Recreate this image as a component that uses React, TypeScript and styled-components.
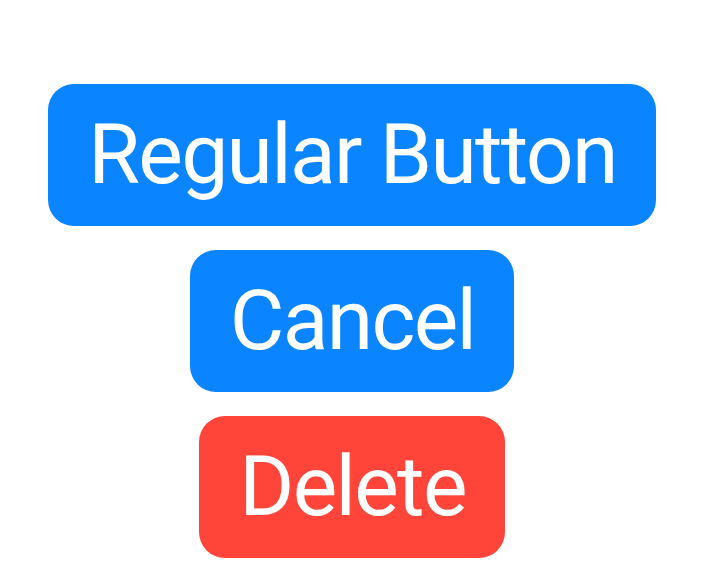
import React from "react";
import styled, { createGlobalStyle } from "styled-components";

const Global = createGlobalStyle`
  html, body { margin: 0; padding: 0; background: #ffffff; }
  body { font-family: Roboto, "Liberation Sans", Arial, sans-serif; }
`;

const Page = styled.div`
  display: flex;
  flex-direction: column;
  align-items: center;
  padding-top: 84px;
  gap: 24px;
`;

const Button = styled.button<{ $variant: "primary" | "danger" }>`
  height: 142px;
  padding: 0 39px 0 40px;
  border: none;
  border-radius: 26px;
  background: ${(p) => (p.$variant === "danger" ? "#ff453a" : "#0a84ff")};
  color: #ffffff;
  font-family: Roboto, "Liberation Sans", Arial, sans-serif;
  font-size: 84px;
  font-weight: 400;
  letter-spacing: -1.7px;
  line-height: 1;
  display: flex;
  align-items: center;
  justify-content: center;
`;

export default function App() {
  return (
    <>
      <Global />
      <Page>
        <Button $variant="primary">Regular Button</Button>
        <Button $variant="primary">Cancel</Button>
        <Button $variant="danger">Delete</Button>
      </Page>
    </>
  );
}
